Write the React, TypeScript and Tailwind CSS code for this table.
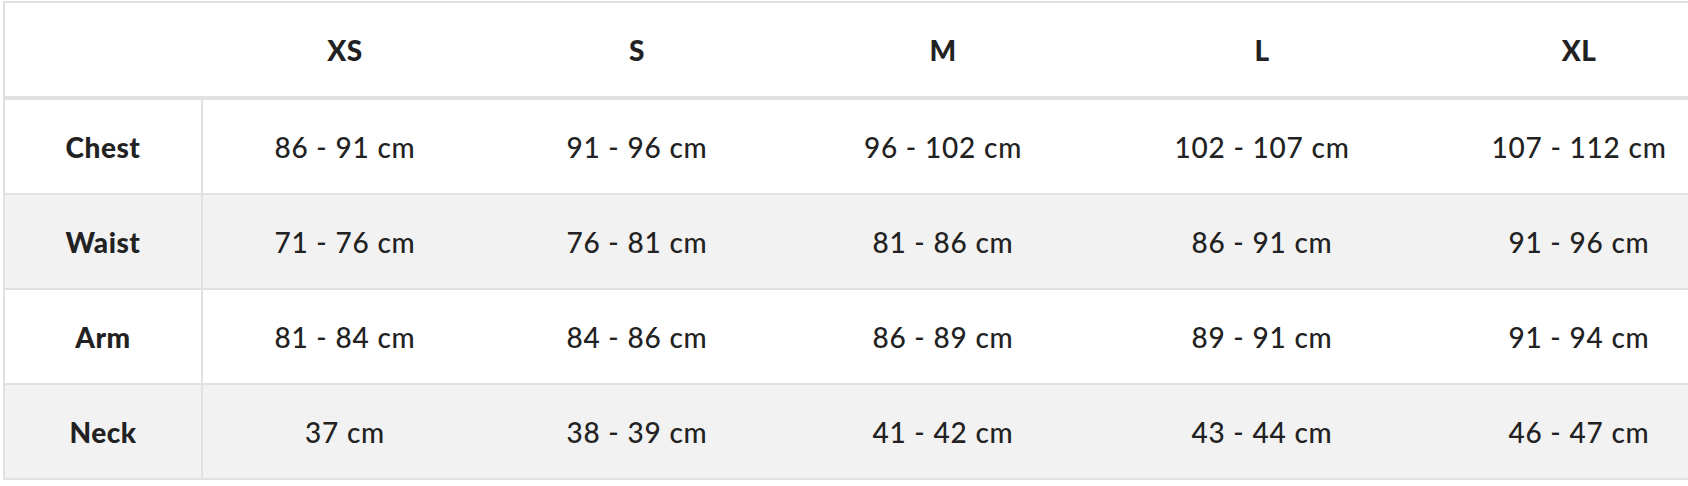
import React from 'react';

const SIZES = ['XS', 'S', 'M', 'L', 'XL'];

const ROWS: { label: string; values: string[] }[] = [
  { label: 'Chest', values: ['86 - 91 cm', '91 - 96 cm', '96 - 102 cm', '102 - 107 cm', '107 - 112 cm'] },
  { label: 'Waist', values: ['71 - 76 cm', '76 - 81 cm', '81 - 86 cm', '86 - 91 cm', '91 - 96 cm'] },
  { label: 'Arm', values: ['81 - 84 cm', '84 - 86 cm', '86 - 89 cm', '89 - 91 cm', '91 - 94 cm'] },
  { label: 'Neck', values: ['37 cm', '38 - 39 cm', '41 - 42 cm', '43 - 44 cm', '46 - 47 cm'] },
];

const COL_WIDTHS = ['w-[198px]', 'w-[284px]', 'w-[300px]', 'w-[312px]', 'w-[326px]', 'w-[308px]'];

export default function App() {
  return (
    <div className="w-full h-[486px] overflow-hidden bg-white pt-[1px] pl-[3px]">
      <table
        className="table-fixed border-separate border-spacing-0 border-t-2 border-l-2 border-[#e1e1e1] text-[28px] text-[#222222] w-[1730px]"
        style={{ fontFamily: 'Lato, "Open Sans", sans-serif' }}
      >
        <colgroup>
          {COL_WIDTHS.map((w, i) => (
            <col key={i} className={w} />
          ))}
        </colgroup>
        <thead>
          <tr>
            <th className="h-[97px] border-b-4 border-[#e1e1e1] p-0" />
            {SIZES.map((size) => (
              <th key={size} className="h-[97px] border-b-4 border-[#e1e1e1] p-0 text-center font-black tracking-[0.5px]">
                {size}
              </th>
            ))}
          </tr>
        </thead>
        <tbody>
          {ROWS.map((row, i) => (
            <tr key={row.label} className={i % 2 === 1 ? 'bg-[#f2f2f2]' : 'bg-white'}>
              <td className="h-[95px] border-b-2 border-r-2 border-[#e1e1e1] p-0 text-center font-black tracking-[0.5px]">
                {row.label}
              </td>
              {row.values.map((v, j) => (
                <td key={j} className="h-[95px] border-b-2 border-[#e1e1e1] p-0 text-center font-medium tracking-[0.8px]">
                  {v}
                </td>
              ))}
            </tr>
          ))}
        </tbody>
      </table>
    </div>
  );
}
